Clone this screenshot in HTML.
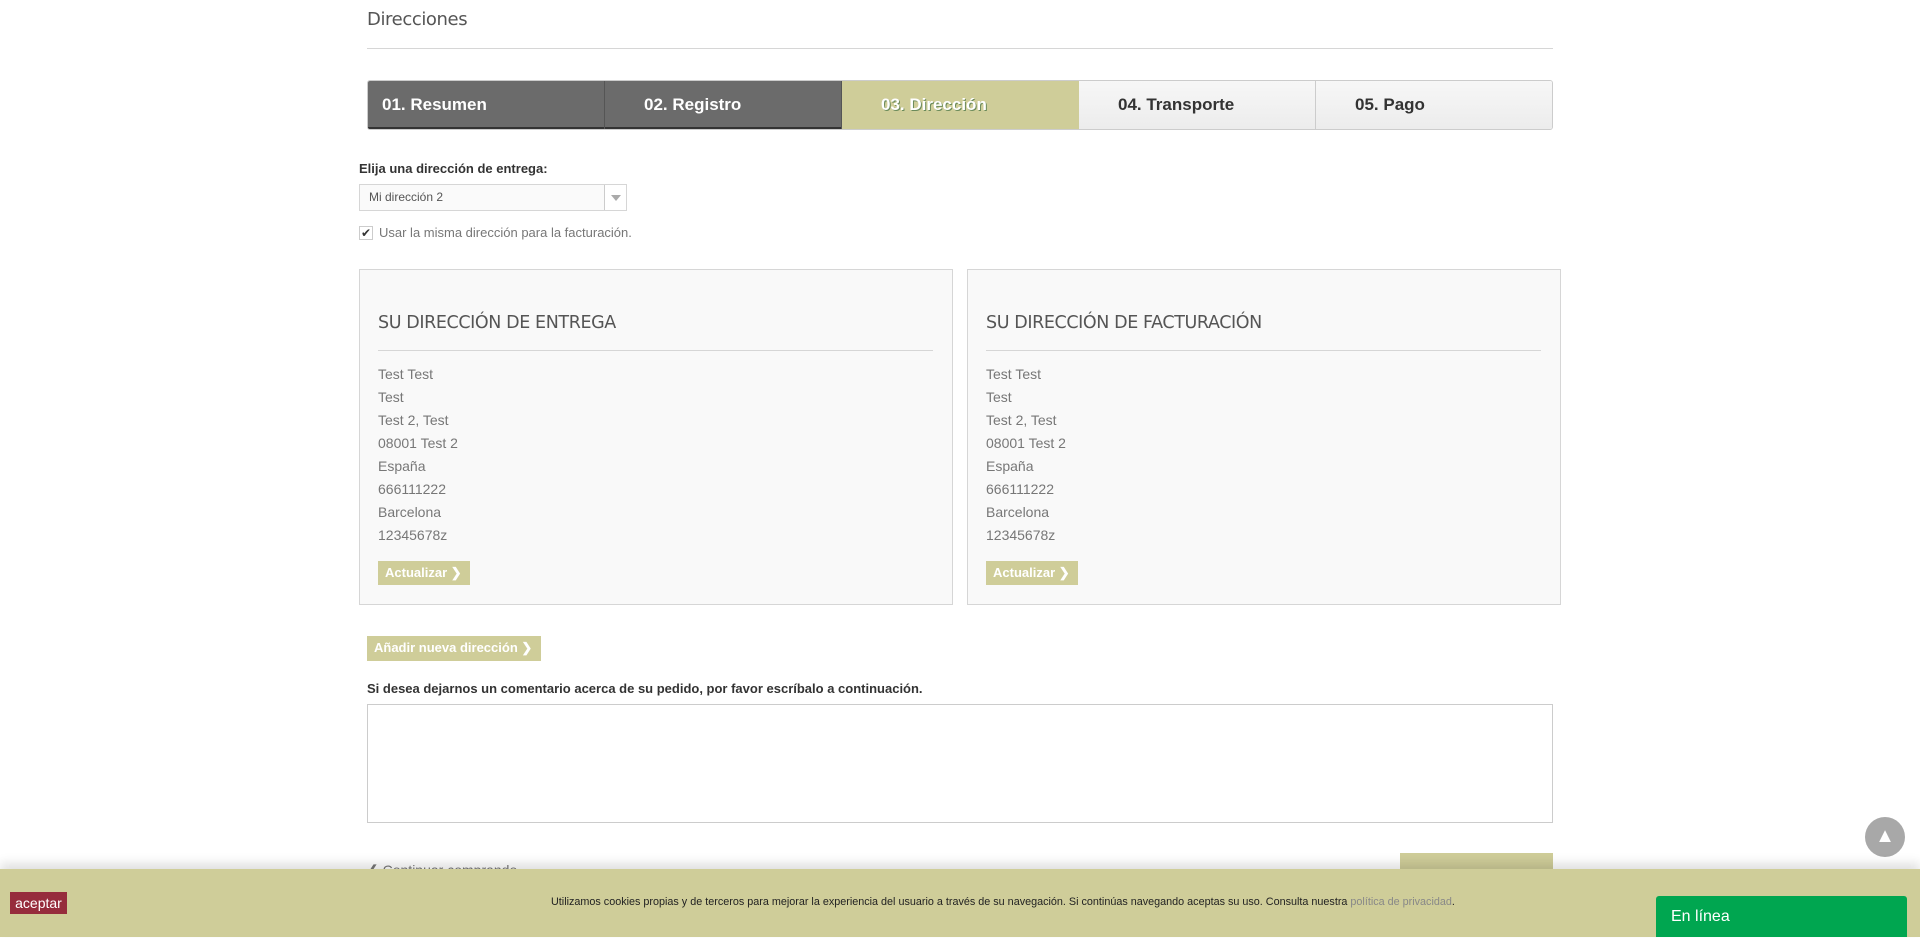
<!DOCTYPE html>
<html><head><meta charset="utf-8"><style>
*{box-sizing:border-box;margin:0;padding:0}
body{width:1920px;height:937px;overflow:hidden;background:#fff;font-family:"Liberation Sans",Arial,sans-serif;position:relative;color:#333}
.abs{position:absolute}
h1{position:absolute;left:367px;top:9px;font-size:18px;font-weight:normal;color:#555;font-family:"DejaVu Sans","Liberation Sans",sans-serif;letter-spacing:-0.4px}
.hr{position:absolute;height:1px;background:#d6d6d6}
.steps{position:absolute;left:367px;top:80px;width:1186px;height:50px;border-radius:3px;overflow:hidden;border:1px solid #ccc}
.steps div{position:absolute;top:0;height:48px;width:237px;font-weight:bold;font-size:17px;line-height:48px;padding-left:39px}
.d{background:#6b6b6b;color:#fff;border-right:1px solid #555;box-shadow:inset 0 -2px 0 #333}
.a{background:#cfcd99;color:#fff;text-shadow:1px 1px 0 #6a8a5a}
.l{background:linear-gradient(#f7f7f7,#ececec);color:#333;border-right:1px solid #ccc}
.box{position:absolute;top:269px;width:594px;height:336px;background:#f9f9f9;border:1px solid #d6d6d6}
.box h2{position:absolute;left:18px;top:43px;font-size:17.5px;font-weight:normal;color:#555;font-family:"DejaVu Sans","Liberation Sans",sans-serif;letter-spacing:-0.4px}
.box .ln{position:absolute;left:18px;top:80px;width:555px;height:1px;background:#d6d6d6}
.box ul{position:absolute;left:18px;top:93px;list-style:none;font-size:14px;line-height:23px;color:#777}
.btn{position:absolute;background:#cfcd99;color:#fff;font-weight:bold;font-size:13px;line-height:24px;padding-left:7px}
</style></head><body>
<h1>Direcciones</h1>
<div class="hr" style="left:367px;top:48px;width:1186px"></div>
<div class="steps">
<div class="d" style="left:0;padding-left:14px">01. Resumen</div>
<div class="d" style="left:237px">02. Registro</div>
<div class="a" style="left:474px">03. Dirección</div>
<div class="l" style="left:711px">04. Transporte</div>
<div class="l" style="left:948px;border-right:none;width:238px">05. Pago</div>
</div>
<div class="abs" style="left:359px;top:161px;font-size:13px;font-weight:bold;color:#333">Elija una dirección de entrega:</div>
<div class="abs" style="left:359px;top:184px;width:268px;height:27px;border:1px solid #d6d6d6;background:#fafafa;font-size:12px;line-height:25px;padding-left:9px;color:#555">Mi dirección 2
<div class="abs" style="right:0;top:0;width:22px;height:25px;border-left:1px solid #ccc;background:#fff"><div class="abs" style="left:6px;top:10px;border-left:5px solid transparent;border-right:5px solid transparent;border-top:6px solid #aaa"></div></div></div>
<div class="abs" style="left:359px;top:226px;width:14px;height:14px;border:1px solid #ccc;background:#fff;font-size:12px;line-height:12px;text-align:center;color:#333">✔</div>
<div class="abs" style="left:379px;top:225px;font-size:13px;color:#777">Usar la misma dirección para la facturación.</div>
<div class="box" style="left:359px"><h2>SU DIRECCIÓN DE ENTREGA</h2><div class="ln"></div>
<ul><li>Test Test</li><li>Test</li><li>Test 2, Test</li><li>08001 Test 2</li><li>España</li><li>666111222</li><li>Barcelona</li><li>12345678z</li></ul>
<div class="btn" style="left:18px;top:291px;width:92px">Actualizar ❯</div></div>
<div class="box" style="left:967px"><h2>SU DIRECCIÓN DE FACTURACIÓN</h2><div class="ln"></div>
<ul><li>Test Test</li><li>Test</li><li>Test 2, Test</li><li>08001 Test 2</li><li>España</li><li>666111222</li><li>Barcelona</li><li>12345678z</li></ul>
<div class="btn" style="left:18px;top:291px;width:92px">Actualizar ❯</div></div>
<div class="btn" style="left:367px;top:636px;width:174px;height:25px">Añadir nueva dirección ❯</div>
<div class="abs" style="left:367px;top:681px;font-size:13px;font-weight:bold;color:#333">Si desea dejarnos un comentario acerca de su pedido, por favor escríbalo a continuación.</div>
<div class="abs" style="left:367px;top:704px;width:1186px;height:119px;border:1px solid #ccc"></div>
<div class="abs" style="left:1400px;top:853px;width:153px;height:30px;background:#cfcd99"></div>
<div class="abs" style="left:367px;top:862px;font-size:14px;color:#777">❮ Continuar comprando</div>
<div class="abs" style="left:1865px;top:817px;width:40px;height:40px;border-radius:50%;background:#a8a8a8;color:#fff;text-align:center;font-size:20px;line-height:38px">▲</div>
<div class="abs" style="left:0;top:869px;width:1920px;height:68px;background:#cfcd99;box-shadow:0 -6px 10px rgba(0,0,0,.12)"></div>
<div class="abs" style="left:10px;top:892px;width:57px;height:22px;background:#962c3c;color:#fff;font-size:14px;line-height:22px;text-align:center">aceptar</div>
<div class="abs" style="left:551px;top:896px;font-size:10.8px;color:#222;white-space:nowrap">Utilizamos cookies propias y de terceros para mejorar la experiencia del usuario a través de su navegación. Si continúas navegando aceptas su uso. Consulta nuestra <span style="color:#888">política de privacidad</span>.</div>
<div class="abs" style="left:1656px;top:896px;width:251px;height:41px;background:#00a650;color:#fff;font-size:16px;line-height:42px;padding-left:15px;border-radius:3px 3px 0 0">En línea</div>
</body></html>
